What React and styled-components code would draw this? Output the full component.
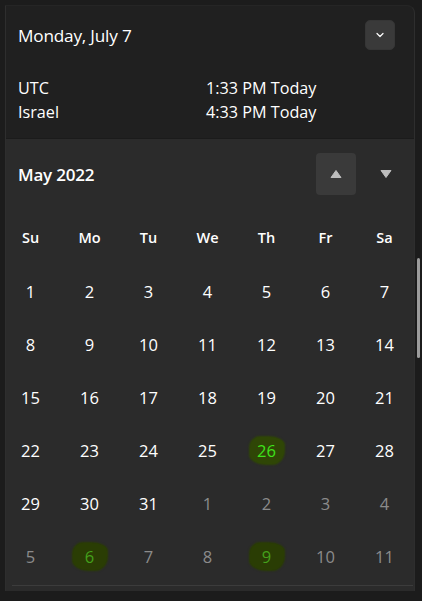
import React from "react";
import styled, { createGlobalStyle } from "styled-components";

const GlobalStyle = createGlobalStyle`
  html, body {
    margin: 0;
    padding: 0;
    background: #1c1c1c;
    font-family: "Open Sans", "Noto Sans", sans-serif;
    color: #ffffff;
  }
`;

const Page = styled.div`
  position: relative;
  width: 422px;
  height: 601px;
  padding: 5px 0 0 5px;
  box-sizing: border-box;
  overflow: hidden;
`;

const Panel = styled.div`
  width: 410px;
  height: 586px;
  box-sizing: border-box;
  border: 1px solid #2e2e2e;
  border-top-color: #252525;
  border-top-right-radius: 8px;
  border-bottom: none;
  background: #2b2b2b;
  display: flex;
  flex-direction: column;
  overflow: hidden;
`;

const Top = styled.div`
  background: #202020;
  padding: 13px 18px 0 12px;
  height: 133px;
  box-sizing: border-box;
  border-bottom: 1px solid #1b1b1b;
`;

const HeaderRow = styled.div`
  display: flex;
  align-items: center;
  justify-content: space-between;
  height: 32px;
`;

const DateTitle = styled.div`
  font-size: 17.2px;
  letter-spacing: -0.2px;
`;

const IconButton = styled.button`
  width: 30px;
  height: 30px;
  border-radius: 5px;
  border: 1px solid #363636;
  background: ${(p) => (p.$active ? "#3a3a3a" : "#2c2c2c")};
  display: flex;
  align-items: center;
  justify-content: center;
  padding: 0;
  margin-right: 1px;
`;

const ClockList = styled.div`
  margin-top: 26px;
  display: grid;
  grid-template-columns: 188px 1fr;
  row-gap: 2px;
  font-size: 16.2px;
  line-height: 22px;
`;

const Calendar = styled.div`
  flex: 1;
  display: flex;
  flex-direction: column;
  padding: 14px 0 0 12px;
`;

const MonthRow = styled.div`
  display: flex;
  align-items: center;
  height: 42px;
  padding-right: 8px;
`;

const MonthTitle = styled.div`
  flex: 1;
  font-size: 17px;
  font-weight: 600;
  letter-spacing: -0.2px;
`;

const NavButton = styled.button`
  width: 40px;
  height: 42px;
  border: none;
  border-radius: 4px;
  background: ${(p) => (p.$hover ? "#3a3a3a" : "transparent")};
  display: flex;
  align-items: center;
  justify-content: center;
  padding: 0;
  margin-left: ${(p) => p.$gap || 0}px;
`;

const Grid = styled.div`
  display: grid;
  grid-template-columns: repeat(7, 59px);
  margin-left: -17px;
  margin-top: 15px;
`;

const WeekDay = styled.div`
  height: 55px;
  display: flex;
  align-items: center;
  justify-content: center;
  font-size: 14.5px;
  font-weight: 600;
`;

const Day = styled.div`
  height: 53px;
  display: flex;
  align-items: center;
  justify-content: center;
  font-size: 16.5px;
  color: ${(p) => (p.$muted ? "#8b8b8b" : "#ffffff")};
`;

const Mark = styled.span`
  display: inline-flex;
  align-items: center;
  justify-content: center;
  min-width: 26px;
  height: 27px;
  padding: 0 4px;
  background: ${(p) => (p.$bright ? "#2f4606" : "#2a3d04")};
  color: ${(p) => (p.$bright ? "#3ee21b" : "#44a11c")};
  border-radius: 30% 45% 35% 50% / 40% 30% 50% 35%;
  box-shadow: 0 0 2px 1px ${(p) => (p.$bright ? "#2f4606" : "#2a3d04")};
`;

const BottomLine = styled.div`
  margin: auto 1px 0 -6px;
  height: 5px;
  border-top: 1px solid #3c3c3c;
  background: #2b2b2b;
`;

const Scrollbar = styled.div`
  position: absolute;
  left: 417px;
  top: 258px;
  width: 3px;
  height: 100px;
  border-radius: 2px;
  background: #9c9c9c;
`;

const Chevron = () => (
  <svg width="10" height="10" viewBox="0 0 10 10">
    <path d="M2 3.5 L5 6.5 L8 3.5" fill="none" stroke="#ffffff" strokeWidth="1.2" strokeLinecap="round" strokeLinejoin="round" />
  </svg>
);

const Triangle = ({ up }) => (
  <svg width="12" height="10" viewBox="0 0 12 10">
    <path
      d={up ? "M6 1.5 L11 8.5 L1 8.5 Z" : "M6 8.5 L11 1.5 L1 1.5 Z"}
      fill="#bdbdbd"
      stroke="#bdbdbd"
      strokeWidth="1"
      strokeLinejoin="round"
    />
  </svg>
);

const weekDays = ["Su", "Mo", "Tu", "We", "Th", "Fr", "Sa"];

const days = [];
for (let i = 1; i <= 31; i++) days.push({ n: i });
for (let i = 1; i <= 11; i++) days.push({ n: i, muted: true });

// highlighted dates: current month 26, next month 6 and 9
const marks = { "26": true, "m6": false, "m9": false };

export default function App() {
  return (
    <>
      <GlobalStyle />
      <Page>
        <Panel>
          <Top>
            <HeaderRow>
              <DateTitle>Monday, July 7</DateTitle>
              <IconButton $active>
                <Chevron />
              </IconButton>
            </HeaderRow>
            <ClockList>
              <span>UTC</span>
              <span>1:33 PM Today</span>
              <span>Israel</span>
              <span>4:33 PM Today</span>
            </ClockList>
          </Top>
          <Calendar>
            <MonthRow>
              <MonthTitle>May 2022</MonthTitle>
              <NavButton $hover>
                <Triangle up />
              </NavButton>
              <NavButton $gap={10}>
                <Triangle />
              </NavButton>
            </MonthRow>
            <Grid>
              {weekDays.map((d) => (
                <WeekDay key={d}>{d}</WeekDay>
              ))}
              {days.map((d, i) => {
                const key = (d.muted ? "m" : "") + d.n;
                return (
                  <Day key={i} $muted={d.muted}>
                    {key in marks ? <Mark $bright={marks[key]}>{d.n}</Mark> : d.n}
                  </Day>
                );
              })}
            </Grid>
            <BottomLine />
          </Calendar>
        </Panel>
        <Scrollbar />
      </Page>
    </>
  );
}
